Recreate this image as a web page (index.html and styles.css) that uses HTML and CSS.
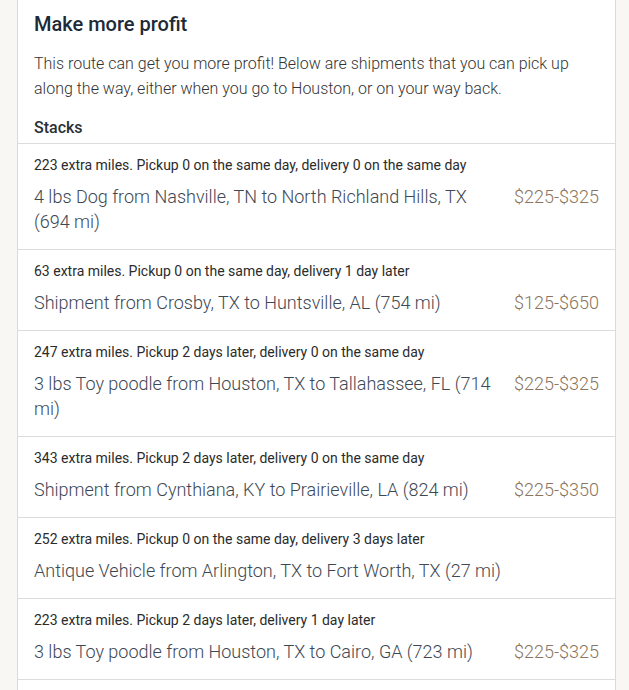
FILE: index.html
```html
<!DOCTYPE html>
<html>
<head>
<meta charset="utf-8">
<link rel="stylesheet" href="styles.css">
</head>
<body>
<div class="page">
  <div class="card">
    <div class="header">
      <h2 class="title">Make more profit</h2>
      <p class="desc">This route can get you more profit! Below are shipments that you can pick up along the way, either when you go to Houston, or on your way back.</p>
      <h3 class="subtitle">Stacks</h3>
    </div>
    <div class="row">
      <div class="meta">223 extra miles. Pickup 0 on the same day, delivery 0 on the same day</div>
      <div class="line"><span class="route">4 lbs Dog from Nashville, TN to North Richland Hills, TX (694 mi)</span><span class="price">$225-$325</span></div>
    </div>
    <div class="row">
      <div class="meta">63 extra miles. Pickup 0 on the same day, delivery 1 day later</div>
      <div class="line"><span class="route">Shipment from Crosby, TX to Huntsville, AL (754 mi)</span><span class="price">$125-$650</span></div>
    </div>
    <div class="row">
      <div class="meta">247 extra miles. Pickup 2 days later, delivery 0 on the same day</div>
      <div class="line"><span class="route">3 lbs Toy poodle from Houston, TX to Tallahassee, FL (714 mi)</span><span class="price">$225-$325</span></div>
    </div>
    <div class="row">
      <div class="meta">343 extra miles. Pickup 2 days later, delivery 0 on the same day</div>
      <div class="line"><span class="route">Shipment from Cynthiana, KY to Prairieville, LA (824 mi)</span><span class="price">$225-$350</span></div>
    </div>
    <div class="row">
      <div class="meta">252 extra miles. Pickup 0 on the same day, delivery 3 days later</div>
      <div class="line"><span class="route">Antique Vehicle from Arlington, TX to Fort Worth, TX (27 mi)</span></div>
    </div>
    <div class="row">
      <div class="meta">223 extra miles. Pickup 2 days later, delivery 1 day later</div>
      <div class="line"><span class="route">3 lbs Toy poodle from Houston, TX to Cairo, GA (723 mi)</span><span class="price">$225-$325</span></div>
    </div>
    <div class="row">
      <div class="meta">&nbsp;</div>
    </div>
  </div>
</div>
</body>
</html>
```
FILE: styles.css
```css
html, body {
  margin: 0;
  padding: 0;
  background: #f8f7f3;
  font-family: Roboto, "Liberation Sans", Arial, sans-serif;
  height: 690px;
  overflow: hidden;
}
.page {
  padding: 0 13px 0 17px;
}
.card {
  background: #ffffff;
  border-left: 1px solid #dddad4;
  border-right: 1px solid #dddad4;
  min-height: 690px;
}
.header {
  padding: 10px 16px 3px;
}
.title {
  margin: 0;
  font-size: 20px;
  line-height: 28px;
  font-weight: 500;
  color: #1d2a38;
}
.desc {
  margin: 13px 0 0;
  font-family: "Roboto Light", Roboto, "Liberation Sans", Arial, sans-serif;
  font-size: 16px;
  line-height: 25px;
  font-weight: 300;
  color: #333333;
}
.subtitle {
  margin: 15px 0 0;
  font-size: 16px;
  line-height: 24px;
  font-weight: 500;
  color: #2a2f36;
}
.row {
  border-top: 1px solid #dcdcdc;
  padding: 11px 16px 15px;
}
.meta {
  font-size: 14px;
  line-height: 20px;
  color: #2b2b2b;
  margin-bottom: 9px;
}
.line {
  display: flex;
  gap: 18px;
  align-items: flex-start;
}
.route {
  flex: 1;
  font-family: "Roboto Light", Roboto, "Liberation Sans", Arial, sans-serif;
  font-size: 18px;
  line-height: 25px;
  font-weight: 300;
  color: #3e4854;
}
.price {
  white-space: nowrap;
  font-family: "Roboto Light", Roboto, "Liberation Sans", Arial, sans-serif;
  font-size: 18px;
  line-height: 25px;
  font-weight: 300;
  color: #8a7660;
}
```
